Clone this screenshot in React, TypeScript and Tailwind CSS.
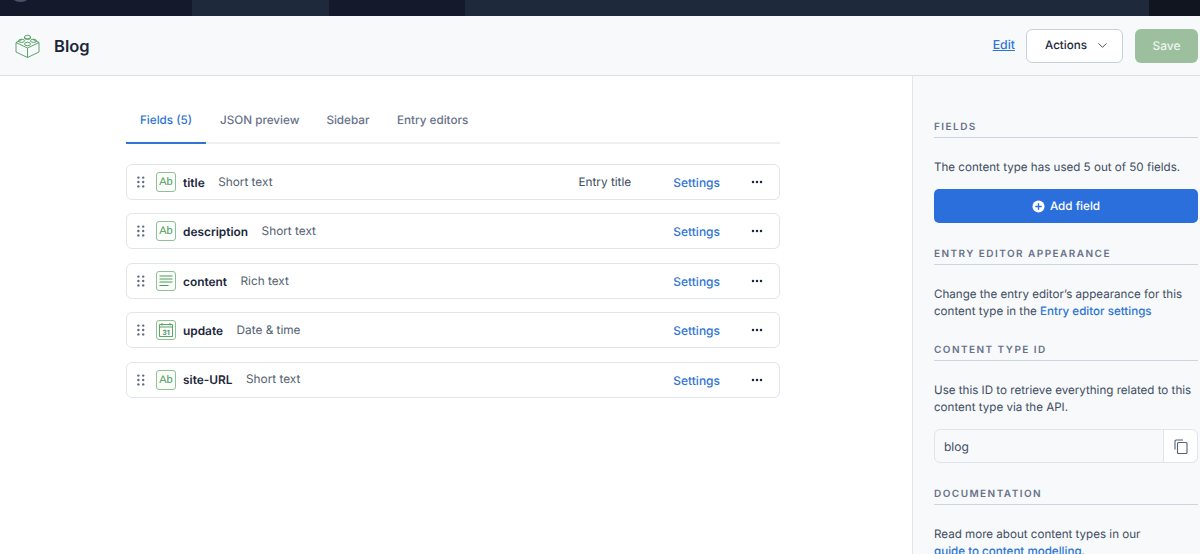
import React from "react";
import { ChevronDown } from "lucide-react";

const Grip = () => (
  <svg width="8" height="12" viewBox="0 0 8 12" className="shrink-0" fill="#5f6b80">
    <circle cx="1.4" cy="1.6" r="1.2" /><circle cx="6.2" cy="1.6" r="1.2" />
    <circle cx="1.4" cy="6" r="1.2" /><circle cx="6.2" cy="6" r="1.2" />
    <circle cx="1.4" cy="10.4" r="1.2" /><circle cx="6.2" cy="10.4" r="1.2" />
  </svg>
);

const TypeIcon = ({ kind }: { kind: "ab" | "rich" | "date" }) => (
  <div className="w-[20px] h-[20px] shrink-0 rounded-[3px] border border-[#8fc197] flex items-center justify-center bg-[#fbfdfb] text-[#4c9a5a]">
    {kind === "ab" && <span className="pt-[1px] text-[11px] leading-none font-['Liberation_Sans',sans-serif]">Ab</span>}
    {kind === "rich" && (
      <svg width="14" height="12" viewBox="0 0 14 12" stroke="#4c9a5a" strokeWidth="1">
        <path d="M0.5 1h13M0.5 4h13M0.5 7h13M0.5 10.5h9" />
      </svg>
    )}
    {kind === "date" && (
      <svg width="16" height="16" viewBox="0 0 16 16" fill="none" stroke="#4c9a5a" strokeWidth="0.9">
        <path d="M1.5 2.5h13v12h-13zM1.5 5h13M4 1v2.500M12 1v2.500" />
        <text x="8" y="12.500" textAnchor="middle" fontSize="7" fontWeight="700" fill="#4c9a5a" stroke="none" fontFamily="Inter, sans-serif">31</text>
      </svg>
    )}
  </div>
);

const Row = ({ name, type, kind, extra }: { name: string; type: string; kind: "ab" | "rich" | "date"; extra?: string }) => (
  <div className="h-[36px] rounded-[6px] border border-[#dfe5ea] bg-white flex items-center pl-[10px] pr-[16px]">
    <Grip />
    <div className="ml-[11px]"><TypeIcon kind={kind} /></div>
    <span className="ml-[7px] pt-[1.500px] text-[11.9px] font-semibold text-[#1b273a]">{name}</span>
    <span className="ml-[13.500px] pt-[1.500px] text-[11.8px] text-[#536171]">{type}</span>
    <div className="flex-1" />
    {extra && <span className="mr-[42px] pt-[1.500px] text-[11.8px] text-[#414d63]">{extra}</span>}
    <span className="mr-[31px] pt-[2px] text-[12px] font-medium text-[#2e75d4]">Settings</span>
    <svg width="12" height="4" viewBox="0 0 12 4" fill="#1b273a">
      <circle cx="2" cy="2" r="1.250" /><circle cx="6" cy="2" r="1.250" /><circle cx="10" cy="2" r="1.250" />
    </svg>
  </div>
);

const Heading = ({ children, className = "" }: { children: React.ReactNode; className?: string }) => (
  <div className={`h-[18px] border-b border-[#c9d5e0] text-[10px] leading-[14px] font-semibold tracking-[1.45px] text-[#67728a] ${className}`}>
    {children}
  </div>
);

export default function App() {
  return (
    <div className="w-[1200px] h-[554px] overflow-hidden flex flex-col bg-white font-['Inter',sans-serif] [text-rendering:geometricPrecision] text-[#414d63]">
      <div className="h-[16px] shrink-0 flex bg-[#141a2c] relative overflow-hidden">
        <div className="absolute left-[8px] top-[-23px] w-[25px] h-[25px] rounded-full bg-[#47536a]" />
        <div className="w-[192px] bg-[#141a2c]" />
        <div className="w-[137px] bg-[#1e293b]" />
        <div className="w-[136px] bg-[#141a2c]" />
        <div className="w-[684px] bg-[#1e293b]" />
        <div className="flex-1 bg-[#10151f]" />
      </div>

      <header className="h-[60px] shrink-0 bg-[#f7f9fa] border-b border-[#d9e1e6] flex items-center pl-[15px] pr-[2px]">
        <svg width="25" height="24" viewBox="0 0 25 24" fill="none" stroke="#4c9a5a" strokeWidth="0.9">
          <path d="M1 8.500L12.500 14L24 8.500V18L12.500 23.500L1 18ZM12.500 14V23.500" />
          <path d="M1 8.500L7 5.500M24 8.500L18 5.500" />
          <ellipse cx="12.500" cy="3" rx="3" ry="1.800" />
          <path d="M9.500 3V4.500C9.500 5.800 15.500 5.800 15.500 4.500V3" />
          <ellipse cx="6.500" cy="6.800" rx="3" ry="1.600" />
          <ellipse cx="18.500" cy="6.800" rx="3" ry="1.600" />
          <ellipse cx="12.500" cy="10" rx="3" ry="1.700" />
        </svg>
        <span className="ml-[14px] pt-[1px] text-[16.5px] font-semibold text-[#1b273a]">Blog</span>
        <div className="flex-1" />
        <span className="text-[12.3px] font-medium text-[#2e75d4] underline">Edit</span>
        <div className="ml-[11px] w-[97px] h-[34px] rounded-[6px] border border-[#c5d2d8] bg-white flex items-center pl-[18px] gap-[8px] text-[11.6px] font-medium text-[#1b273a]">
          <span className="pt-[1px]">Actions</span>
          <ChevronDown size={15} strokeWidth={1.5} className="text-[#414d63]" />
        </div>
        <div className="ml-[12px] w-[63px] h-[34px] rounded-[6px] bg-[#9cbf9e] flex items-center justify-center text-[12px] font-medium text-[#eef5ee]">
          Save
        </div>
      </header>

      <div className="flex-1 flex min-h-0">
        <main className="w-[912px] shrink-0 pl-[126px] pr-[132px] pt-[24px]">
          <nav className="h-[44px] flex border-b-2 border-[#edf0f3] text-[11.7px] font-medium text-[#67728a]">
            <div className="w-[80px] h-[44px] flex items-center justify-center border-b-2 border-[#2e75d4] text-[#2e75d4]">Fields (5)</div>
            <div className="ml-[14px] h-[42px] flex items-center">JSON preview</div>
            <div className="ml-[27px] h-[42px] flex items-center">Sidebar</div>
            <div className="ml-[27.500px] h-[42px] flex items-center">Entry editors</div>
          </nav>
          <div className="mt-[20px] flex flex-col gap-[13.4px]">
            <Row name="title" type="Short text" kind="ab" extra="Entry title" />
            <Row name="description" type="Short text" kind="ab" />
            <Row name="content" type="Rich text" kind="rich" />
            <Row name="update" type="Date & time" kind="date" />
            <Row name="site-URL" type="Short text" kind="ab" />
          </div>
        </main>

        <aside className="flex-1 bg-[#f7f9fa] border-l border-[#e1e6ea] pl-[21px] pr-[2px] pt-[44px] text-[11.6px] leading-[17px] text-[#414d63] overflow-hidden">
          <Heading>FIELDS</Heading>
          <p className="mt-[21px] whitespace-nowrap">The content type has used 5 out of 50 fields.</p>
          <div className="mt-[13px] h-[34px] rounded-[5px] bg-[#2b6fdc] text-[11.7px] text-white font-medium flex items-center justify-center gap-[5px]">
            <svg width="13" height="13" viewBox="0 0 14 14">
              <circle cx="7" cy="7" r="6.500" fill="#fff" />
              <path d="M7 3.500v7M3.500 7h7" stroke="#2b6fdc" strokeWidth="1.500" />
            </svg>
            <span>Add field</span>
          </div>
          <Heading className="mt-[24px]">ENTRY EDITOR APPEARANCE</Heading>
          <p className="mt-[21px] whitespace-nowrap">
            Change the entry editor’s appearance for this<br />
            content type in the <span className="text-[#2e75d4] font-medium">Entry editor settings</span>
          </p>
          <Heading className="mt-[23px]">CONTENT TYPE ID</Heading>
          <p className="mt-[21px] whitespace-nowrap">
            Use this ID to retrieve everything related to this<br />
            content type via the API.
          </p>
          <div className="mt-[13px] h-[34px] rounded-[6px] border border-[#dfe5ea] flex items-center bg-[#f7f9fa]">
            <span className="flex-1 pl-[9px] text-[12px]">blog</span>
            <div className="w-[34px] h-full bg-white border-l border-[#dfe5ea] rounded-r-[6px] flex items-center justify-center">
              <svg width="14" height="15" viewBox="0 0 14 15" fill="none" stroke="#536171" strokeWidth="1.100">
                <path d="M1 10.500V2.200C1 1.500 1.500 1 2.200 1H9" />
                <rect x="3.500" y="3.500" width="9.500" height="11" rx="1" />
              </svg>
            </div>
          </div>
          <Heading className="mt-[24px]">DOCUMENTATION</Heading>
          <p className="mt-[21px] whitespace-nowrap">
            Read more about content types in our<br />
            <span className="text-[#2e75d4] font-medium">guide to content modelling</span>.
          </p>
        </aside>
      </div>
    </div>
  );
}
